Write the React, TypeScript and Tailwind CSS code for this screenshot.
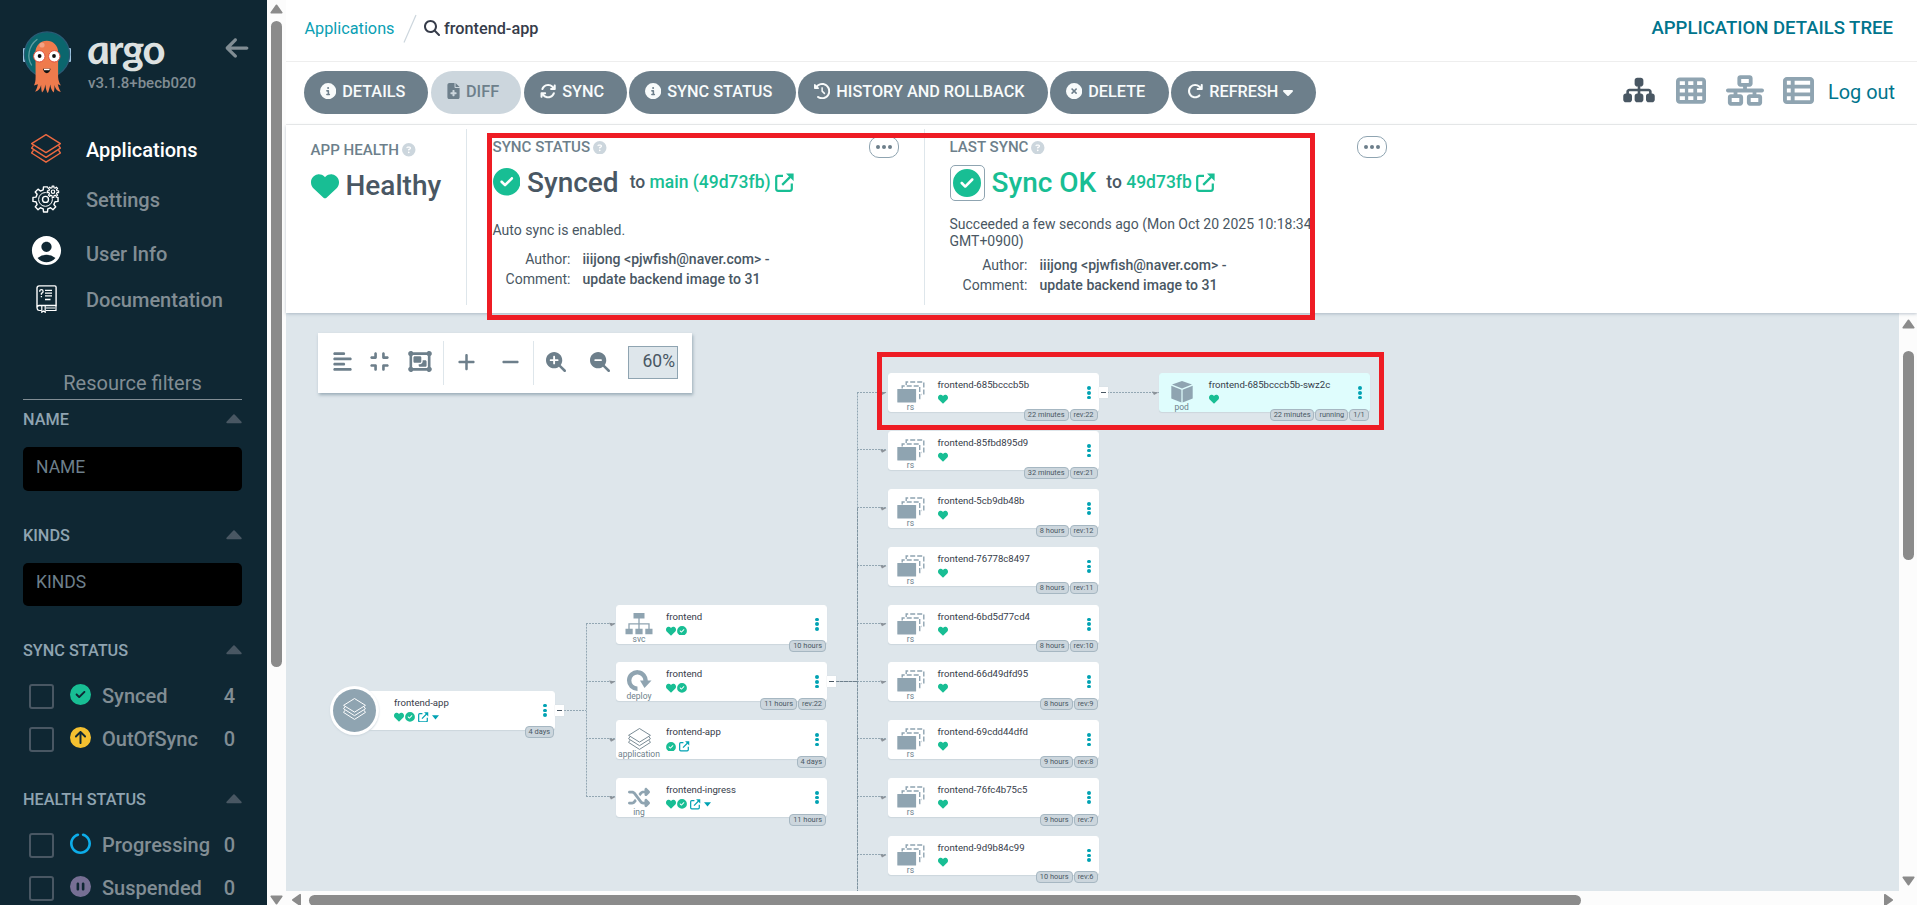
import React from "react";
import {
  FaAlignLeft,
  FaArrowRotateRight,
  FaArrowsRotate,
  FaCaretDown,
  FaCircleArrowUp,
  FaCircleCheck,
  FaCircleInfo,
  FaCircleNotch,
  FaCirclePause,
  FaCircleQuestion,
  FaCircleXmark,
  FaClockRotateLeft,
  FaCompress,
  FaFileMedical,
  FaHeart,
  FaMagnifyingGlass,
  FaMagnifyingGlassMinus,
  FaMagnifyingGlassPlus,
  FaMinus,
  FaNetworkWired,
  FaObjectGroup,
  FaPlus,
  FaShuffle,
  FaSitemap,
  FaTableCells,
  FaTableList,
  FaArrowLeft,
} from "react-icons/fa6";
import { MdAccountCircle } from "react-icons/md";

/* ---------- drawings ---------- */

function ArgoMascot() {
  return (
    <svg width="48" height="63" viewBox="0 0 48 63" className="block shrink-0">
      <rect x="0" y="17" width="4" height="14" rx="1" fill="#9dc3e0" />
      <rect x="44" y="17" width="4" height="14" rx="1" fill="#9dc3e0" />
      <circle cx="24" cy="23.5" r="22.6" fill="#0b666d" stroke="#2a5a75" strokeWidth="1.2" />
      <path d="M14 8.5C5 15 4 27 8.5 34" fill="none" stroke="#5f9da1" strokeWidth="1.3" strokeLinecap="round" />
      <path
        d="M12.5 21a11.3 11.3 0 0 1 22.6 0v25c.3 4 1.500 6.500 2.900 8.500l-3.200-1.200c.8 3 1.700 5.500 3 7.700-4-1-5.500-3.500-6.200-7-.1 3-.3 5.300-.8 7.600-2.300-2-3.100-4.600-3.500-8.100-.8 3.400-1.200 6-2.500 8.800-1.700-2.600-2-5.400-2.500-8.800-.5 3.500-1.200 6-3.300 8-.6-2.300-.9-4.500-.9-7.500-.9 3.500-2.300 5.800-6 6.800 1.400-2.200 2.200-4.600 2.800-7.500l-4 1.200c1.200-2.200 1.700-4.600 1.700-8.500z"
        fill="#ef7b4d"
      />
      <circle cx="19" cy="14" r="2.600" fill="#f5a283" />
      <circle cx="16.300" cy="25.300" r="5.700" fill="#fff" stroke="#e34e3b" strokeWidth="1" />
      <circle cx="31.300" cy="25.300" r="5.700" fill="#fff" stroke="#e34e3b" strokeWidth="1" />
      <circle cx="16.600" cy="25" r="1.900" fill="#111" />
      <circle cx="31" cy="25" r="1.900" fill="#111" />
      <path d="M20 37.800h7.600c-.5 2.800-2 4.400-3.800 4.400s-3.300-1.600-3.800-4.400z" fill="#111" />
      <path d="M21 37.800h5.600v1.400h-5.600z" fill="#fff" />
    </svg>
  );
}

function Layers({ className, width = 1.4 }: { className?: string; width?: number }) {
  return (
    <svg viewBox="0 0 30 29" className={className} fill="none" stroke="currentColor" strokeWidth={width} strokeLinejoin="round">
      <path d="M15 .7.6 9.700 15 18.600l14.400-8.900z" />
      <path d="M2.500 11.400.6 14.200 15 23.300l14.400-9.100-1.900-2.800" />
      <path d="M2.500 16.100.6 19 15 28.200 29.400 19l-1.900-2.900" />
    </svg>
  );
}

function gearPath(cx: number, cy: number, inner: number, outer: number, teeth: number, turn = 0) {
  const pts: string[] = [];
  const step = (Math.PI * 2) / teeth;
  for (let i = 0; i < teeth; i++) {
    const a = i * step + turn;
    const marks: [number, number][] = [
      [a - step * 0.3, inner],
      [a - step * 0.2, outer],
      [a + step * 0.2, outer],
      [a + step * 0.3, inner],
    ];
    for (const [ang, r] of marks) {
      pts.push(`${(cx + Math.sin(ang) * r).toFixed(2)} ${(cy - Math.cos(ang) * r).toFixed(2)}`);
    }
  }
  return `M${pts.join("L")}Z`;
}

function Gears() {
  return (
    <svg width="30" height="28" viewBox="0 0 30 28" className="block" fill="none" stroke="#fff" strokeWidth="1.4" strokeLinejoin="round">
      <path d={gearPath(14.5, 14.4, 9.8, 12.7, 8)} />
      <circle cx="14.500" cy="14.400" r="6.900" strokeWidth="1" />
      <circle cx="14.500" cy="14.400" r="3" />
      <circle cx="22" cy="6.700" r="6.600" fill="#0f2733" stroke="none" />
      <path d={gearPath(22, 6.7, 4.1, 5.7, 8)} strokeWidth="1.200" />
      <circle cx="22" cy="6.700" r="1.700" strokeWidth="1.200" />
    </svg>
  );
}

function DocIcon() {
  return (
    <svg width="21" height="28" viewBox="0 0 21 28" className="block" fill="none" stroke="#fff" strokeWidth="1.400">
      <path d="M3.200.9h15.600q1.300 0 1.300 1.300v18.300H3.200q-2.200 0-2.200 2.300V3.100Q1 .9 3.200.9z" />
      <path d="M1 22.500q0 3 2.400 3h2M10 25.500h10v-5M10 23h9" strokeWidth="1.200" />
      <path d="M5.800 20.500v6.700l1.700-1.300 1.700 1.300v-6.700" strokeWidth="1.200" />
      <path d="M3.700 6.700q0-2 1.700-2t1.700 1.700q0 1.200-1.700 2v1.300M5.400 11v1.200M9 5.400h7M9 8.100h7M9 10.800h7M9 14.500h5.500" strokeWidth="1.300" />
    </svg>
  );
}

function ExternalLink({ className }: { className?: string }) {
  return (
    <svg viewBox="0 0 19 19" className={className} fill="none" stroke="currentColor" strokeWidth="2.200">
      <path d="M8 2.800H3.200Q1.200 2.800 1.200 4.800v11q0 2 2 2h11.600q2 0 2-2V10.500" />
      <path d="M7.200 11.900 15.500 3.600" />
      <path d="M11 .5h7.600v7.600z" fill="currentColor" stroke="none" />
    </svg>
  );
}

function Triangle({ className }: { className?: string }) {
  return (
    <svg viewBox="0 0 13 10" className={className}>
      <path d="M6.500 1.300 11.800 8.700H1.200z" fill="#8b8b8b" stroke="#8b8b8b" strokeWidth="1.600" strokeLinejoin="round" />
    </svg>
  );
}

function SectionCaret() {
  return (
    <svg width="16" height="10" viewBox="0 0 16 10" className="block">
      <path d="M8 1.200 14.800 8.300H1.200z" fill="#495763" stroke="#495763" strokeWidth="1.800" strokeLinejoin="round" />
    </svg>
  );
}

/* ---------- sidebar ---------- */

function NavItem({ icon, label, row, active }: { icon: React.ReactNode; label: string; row: string; active?: boolean }) {
  return (
    <div className={`flex shrink-0 items-center ${row}`}>
      <div className="ml-[31px] flex w-[30px] justify-center">{icon}</div>
      <span className={`ml-[25px] text-[20px] leading-6 font-medium ${active ? "text-white" : "text-[#818d94]"}`}>{label}</span>
    </div>
  );
}

function FilterTitle({ children, className }: { children: string; className: string }) {
  return (
    <div className={`mr-[25px] ml-[23px] flex shrink-0 items-center justify-between text-[16.250px] font-medium text-[#8fa4b1] ${className}`}>
      <span>{children}</span>
      <div className="pb-[3px]">
        <SectionCaret />
      </div>
    </div>
  );
}

function FilterRow({ icon, label, count }: { icon: React.ReactNode; label: string; count: number }) {
  return (
    <div className="mr-[32px] ml-[29px] flex h-[43px] items-center text-[20px] font-medium text-[#818d94]">
      <div className="mt-[2px] h-[25px] w-[25px] shrink-0 rounded-[3px] border-2 border-[#495763]" />
      <div className="-mt-[2px] ml-[15.500px] w-[21px] shrink-0 text-[21px]">{icon}</div>
      <span className="ml-[11.500px]">{label}</span>
      <span className="ml-auto">{count}</span>
    </div>
  );
}

function Sidebar() {
  return (
    <aside className="flex h-full w-[267px] shrink-0 flex-col overflow-hidden bg-[#0f2733]">
      <div className="flex h-[125px] shrink-0 items-start pt-[30.500px] pl-[23px]">
        <ArgoMascot />
        <div className="ml-[16px] flex w-[130px] flex-col items-start">
          <span className="h-[44px] origin-left -skew-x-[-8deg] scale-x-[1.08] font-['Lato'] text-[41px] leading-[35px] font-bold tracking-[-1.500px] text-[#dde1e1] italic">
            argo
          </span>
          <span className="pl-px text-[15px] leading-[17px] font-medium text-[#818d94]">v3.1.8+becb020</span>
        </div>
        <FaArrowLeft className="mt-[4px] ml-[8px] h-[26px] w-[24px] text-[#818d94]" />
      </div>
      <NavItem active row="h-[50px]" label="Applications" icon={<Layers className="-mt-[3px] h-[29px] w-[30px] text-[#ef6a41]" />} />
      <NavItem row="h-[50px]" label="Settings" icon={<div className="-mt-[3px]"><Gears /></div>} />
      <NavItem row="h-[57px]" label="User Info" icon={<MdAccountCircle className="-mt-[7px] h-[35px] w-[35px] shrink-0 text-white" />} />
      <NavItem row="h-[36px]" label="Documentation" icon={<div className="-mt-[3px]"><DocIcon /></div>} />

      <div className="mt-[49px] mr-[25px] ml-[23px] flex h-[33px] shrink-0 items-center justify-center border-b border-[#818d94] text-[20px] text-[#818d94]">
        <span>Resource filters</span>
      </div>
      <FilterTitle className="mt-px h-[38px]">NAME</FilterTitle>
      <div className="mt-[8px] mr-[25px] ml-[23px] h-[44px] shrink-0 rounded-[5px] bg-black pl-[13px] text-[17.500px] leading-[41px] text-[#6d7f8b]">NAME</div>
      <FilterTitle className="mt-[27px] h-[37px]">KINDS</FilterTitle>
      <div className="mt-[8px] mr-[25px] ml-[23px] h-[43px] shrink-0 rounded-[5px] bg-black pl-[13px] text-[17.500px] leading-[39px] text-[#6d7f8b]">KINDS</div>
      <FilterTitle className="mt-[27px] h-[37px]">SYNC STATUS</FilterTitle>
      <div className="mt-[4px] shrink-0">
        <FilterRow icon={<FaCircleCheck className="text-[#18be94]" />} label="Synced" count={4} />
        <FilterRow icon={<FaCircleArrowUp className="text-[#f4c030]" />} label="OutOfSync" count={0} />
      </div>
      <FilterTitle className="mt-[22px] h-[37px]">HEALTH STATUS</FilterTitle>
      <div className="mt-[4px] shrink-0">
        <FilterRow icon={<FaCircleNotch className="text-[#0dadea]" />} label="Progressing" count={0} />
        <FilterRow icon={<FaCirclePause className="text-[#766f94]" />} label="Suspended" count={0} />
      </div>
    </aside>
  );
}

/* ---------- top of the page ---------- */

function ActionButton({ icon, label, width, disabled, caret }: { icon: React.ReactNode; label: string; width: string; disabled?: boolean; caret?: boolean }) {
  return (
    <button
      className={`flex h-[43px] items-center rounded-full pl-[16px] text-[16.250px] font-medium whitespace-nowrap ${width} ${
        disabled ? "bg-[#ccd6dd] text-[#6d7f8b]" : "bg-[#6d7f8b] text-[#f8fbfb]"
      }`}
    >
      <span className="-mt-[2px]">{icon}</span>
      <span className="ml-[6px]">{label}</span>
      {caret && <FaCaretDown className="ml-[2px] text-[16px]" />}
    </button>
  );
}

function TopBar() {
  return (
    <header className="flex h-[62px] shrink-0 items-center justify-between border-b border-[#eeeeee] bg-white pr-[24px] pb-[14px] pl-[18.500px]">
      <div className="flex items-center text-[16.250px]">
        <span className="mt-[11px] text-[#0aa0b4]">Applications</span>
        <svg width="14" height="30" viewBox="0 0 14 30" className="mt-[10px] ml-[8px] block">
          <path d="M13 1 1 28.500" stroke="#ccd6dd" strokeWidth="1.200" />
        </svg>
        <FaMagnifyingGlass className="mt-[9px] ml-[7px] text-[16px] text-[#363c4a]" />
        <span className="mt-[11px] ml-[4.500px] font-medium text-[#363c4a]">frontend-app</span>
      </div>
      <span className="mt-[10px] text-[18.550px] font-medium text-[#00758d]">APPLICATION DETAILS TREE</span>
    </header>
  );
}

function Toolbar() {
  return (
    <div className="flex h-[63px] shrink-0 items-center justify-between border-b border-[#eeeeee] bg-white pr-[22px] pb-[2px] pl-[18px]">
      <div className="flex items-center gap-[3px]">
        <ActionButton width="w-[124px]" label="DETAILS" icon={<FaCircleInfo />} />
        <ActionButton width="w-[90px]" disabled label="DIFF" icon={<FaFileMedical className="w-[13px]" />} />
        <ActionButton width="w-[103px]" label="SYNC" icon={<FaArrowsRotate />} />
        <ActionButton width="w-[167px] -ml-px" label="SYNC STATUS" icon={<FaCircleInfo />} />
        <ActionButton width="w-[250px] -ml-px" label="HISTORY AND ROLLBACK" icon={<FaClockRotateLeft />} />
        <ActionButton width="w-[119px] -ml-px" label="DELETE" icon={<FaCircleXmark />} />
        <ActionButton width="w-[145px] -ml-px" label="REFRESH" caret icon={<FaArrowRotateRight />} />
      </div>
      <div className="flex items-center">
        <FaSitemap className="-mt-[3px] h-[28px] w-[34px] text-[#495763]" />
        <FaTableCells className="-mt-[3px] ml-[20px] h-[31px] w-[30px] text-[#8fa4b1]" />
        <FaNetworkWired className="-mt-[3px] ml-[20px] h-[31px] w-[38px] text-[#8fa4b1]" />
        <FaTableList className="-mt-[3px] ml-[19px] h-[31px] w-[31px] text-[#8fa4b1]" />
        <span className="ml-[14px] pt-px text-[19.900px] text-[#00758d]">Log out</span>
      </div>
    </div>
  );
}

function StatusTitle({ children }: { children: string }) {
  return (
    <div className="flex h-[18px] items-center text-[15.100px] font-medium text-[#6d7f8b]">
      {children}
      <FaCircleQuestion className="ml-[3px] text-[13.500px] text-[#ccd6dd]" />
    </div>
  );
}

function MoreButton() {
  return (
    <button className="flex h-[22px] w-[30px] shrink-0 items-center justify-center gap-[2px] rounded-[10px] border border-[#8fa4b1] bg-white">
      <i className="h-[4px] w-[4px] rounded-full bg-[#6d7f8b]" />
      <i className="h-[4px] w-[4px] rounded-full bg-[#6d7f8b]" />
      <i className="h-[4px] w-[4px] rounded-full bg-[#6d7f8b]" />
    </button>
  );
}

function CommitInfo() {
  return (
    <div className="grid grid-cols-[78px_auto] gap-x-[12px] text-[14.060px] leading-[20px] whitespace-nowrap text-[#495763]">
      <span className="text-right">Author:</span>
      <span className="font-medium">iiijong &lt;pjwfish@naver.com&gt; -</span>
      <span className="text-right">Comment:</span>
      <span className="font-medium">update backend image to 31</span>
    </div>
  );
}

function StatusPanel() {
  return (
    <section className="relative z-10 flex h-[188px] shrink-0 bg-white pt-[4px] pb-[8px] shadow-[0_1px_3px_rgba(110,130,150,0.45)]">
      <div className="w-[181px] border-r border-[#dee6eb] pt-[12px] pl-[24.500px]">
        <StatusTitle>APP HEALTH</StatusTitle>
        <div className="mt-[10px] flex h-[34px] items-center text-[28px] font-medium text-[#495763]">
          <FaHeart className="mr-[7px] text-[28px] text-[#18be94]" />
          Healthy
        </div>
      </div>

      <div className="w-[458px] border-r border-[#dee6eb] pt-[7px] pr-[25px] pl-[25.500px]">
        <div className="flex h-[22px] items-center justify-between">
          <div className="pt-px"><StatusTitle>SYNC STATUS</StatusTitle></div>
          <MoreButton />
        </div>
        <div className="mt-[7px] flex h-[35px] items-center text-[28px] font-medium whitespace-nowrap text-[#495763]">
          <FaCircleCheck className="-mt-px mr-[7px] text-[27.500px] text-[#18be94]" />
          Synced
          <span className="ml-[11px] text-[17.500px]">
            to <span className="text-[#18be94]">main (49d73fb)</span>
          </span>
          <ExternalLink className="-mt-px ml-[4px] h-[19px] w-[19px] text-[#18be94]" />
        </div>
        <div className="mt-[20px] text-[14.060px] leading-[20px] text-[#495763]">Auto sync is enabled.</div>
        <div className="mt-[9px]"><CommitInfo /></div>
      </div>

      <div className="w-[462px] pt-[7px] pl-[24.500px]">
        <div className="flex h-[22px] items-center justify-between">
          <div className="pt-px"><StatusTitle>LAST SYNC</StatusTitle></div>
          <MoreButton />
        </div>
        <div className="mt-[7px] flex h-[35px] items-center text-[28px] font-medium whitespace-nowrap text-[#18be94]">
          <span className="mt-px mr-[7px] flex h-[36px] w-[35px] shrink-0 items-center justify-center rounded-[5px] border border-[#8fa4b1]">
            <FaCircleCheck className="text-[28px]" />
          </span>
          Sync OK
          <span className="ml-[10px] text-[17.500px]">
            <span className="text-[#495763]">to</span> 49d73fb
          </span>
          <ExternalLink className="-mt-px ml-[4px] h-[19px] w-[19px]" />
        </div>
        <div className="mt-[16px] w-[380px] text-[14px] leading-[17px] text-[#495763]">
          Succeeded a few seconds ago (Mon Oct 20 2025 10:18:34 GMT+0900)
        </div>
        <div className="mt-[5px]"><CommitInfo /></div>
      </div>
    </section>
  );
}

/* ---------- resource tree ---------- */

function RsIcon() {
  return (
    <svg width="28" height="22" viewBox="0 0 28 22" className="block">
      <g fill="none" stroke="#8fa4b1" strokeWidth="1.400" strokeDasharray="5 2">
        <path d="M9.200 4V1h17.600v12.500H24.500" />
        <path d="M5.200 7.500V5h17.500v12.500H21" />
      </g>
      <rect x=".3" y="8" width="18.800" height="13.500" rx=".6" fill="#8fa4b1" />
    </svg>
  );
}

function SvcIcon() {
  return (
    <svg width="28" height="22" viewBox="0 0 28 22" className="block" fill="#8fa4b1">
      <path d="M8.500 0h11v5.500h-11zM.5 15.800h7.200V21.300H.5zM10.400 15.800h7.200V21.300h-7.200zM20.300 15.800h7.200V21.300h-7.200z" />
      <path d="M14 5v11M4 16v-5.200h20V16" fill="none" stroke="#8fa4b1" strokeWidth="1.300" />
    </svg>
  );
}

function DeployIcon() {
  return (
    <svg width="26" height="22" viewBox="0 0 26 22" className="block">
      <path d="M11.500 18.700A8.200 8.200 0 1 1 19.500 11.500" fill="none" stroke="#8fa4b1" strokeWidth="4.400" />
      <path d="M14 10.500h11.500L18.500 18z" fill="#8fa4b1" />
    </svg>
  );
}

function PodIcon() {
  return (
    <svg width="22" height="22" viewBox="0 0 22 22" className="block" fill="#8fa4b1">
      <path d="M11 0 21 3.600 11 7.600 1 3.600z" />
      <path d="M.3 4.800 10.400 8.700V21.600L.3 17.400z" />
      <path d="M21.700 4.800 11.600 8.700V21.600L21.700 17.400z" />
    </svg>
  );
}

type Mark = "heart" | "check" | "link" | "caret";

function Marks({ marks }: { marks: Mark[] }) {
  return (
    <div className="flex items-center">
      {marks.map((m) => {
        if (m === "heart") return <FaHeart key={m} className="mr-px h-[10px] w-[10px] text-[#18be94]" />;
        if (m === "check") return <FaCircleCheck key={m} className="mr-[3px] h-[9.800px] w-[10px] text-[#18be94]" />;
        if (m === "link") return <ExternalLink key={m} className="h-[10.500px] w-[10.500px] text-[#00a2b3]" />;
        return (
          <svg key={m} width="7" height="5" viewBox="0 0 7 5" className="ml-[3px]">
            <path d="M0 .3h7L3.500 4.500z" fill="#00a2b3" />
          </svg>
        );
      })}
    </div>
  );
}

interface NodeData {
  x: number;
  y: number;
  w: number;
  name: string;
  kind: string;
  marks: Mark[];
  pills: string[];
  collapse?: boolean;
  tint?: boolean;
}

function KindIcon({ kind }: { kind: string }) {
  if (kind === "rs") return <RsIcon />;
  if (kind === "svc") return <SvcIcon />;
  if (kind === "deploy") return <DeployIcon />;
  if (kind === "pod") return <PodIcon />;
  if (kind === "ing") return <FaShuffle className="h-[23px] w-[22px] text-[#8fa4b1]" />;
  return <Layers className="h-[22px] w-[23px] text-[#6d7f8b]" width={1.2} />;
}

function TreeNode({ node }: { node: NodeData }) {
  const root = node.kind === "";
  return (
    <div className="absolute" style={{ left: node.x, top: node.y, width: node.w, height: 39 }}>
      <div
        className={`flex h-full rounded-[3px] border shadow-[0_1px_1px_#ccd6dd] ${node.tint ? "border-[#dffdfd] bg-[#dffdfd]" : "border-white bg-white"}`}
      >
        {root ? (
          <div className="-mt-[6px] -ml-[25px] flex h-[49px] w-[49px] shrink-0 items-center justify-center rounded-full bg-white shadow-[0_1px_2px_#ccd6dd]">
            <div className="flex h-[43.500px] w-[43.500px] items-center justify-center rounded-full bg-[#8fa4b1]">
              <Layers className="-mt-[2px] h-[22px] w-[23px] text-white" width={1.300} />
            </div>
          </div>
        ) : (
          <div className="flex w-[44px] shrink-0 flex-col items-center pt-[7px]">
            <div className="flex h-[22px] items-center">
              <KindIcon kind={node.kind} />
            </div>
            <span className="text-[8.500px] leading-[9px] text-[#6d7f8b]">{node.kind}</span>
          </div>
        )}
        <div className={`flex flex-col pt-[5px] ${root ? "pl-[15px]" : "pl-[5px]"}`}>
          <span className="text-[9.600px] leading-[12px] whitespace-nowrap text-[#363c4a]">{node.name}</span>
          <div className="mt-[3px]">
            <Marks marks={node.marks} />
          </div>
        </div>
        <div className="mr-[7px] ml-auto flex flex-col items-center justify-center gap-[1.200px]">
          <i className="h-[3.600px] w-[3.600px] rounded-full bg-[#00a2b3]" />
          <i className="h-[3.600px] w-[3.600px] rounded-full bg-[#00a2b3]" />
          <i className="h-[3.600px] w-[3.600px] rounded-full bg-[#00a2b3]" />
        </div>
      </div>
      <div className="absolute right-px -bottom-[8.700px] flex gap-px">
        {node.pills.map((p) => (
          <span
            key={p}
            className="h-[12px] rounded-[4px] border border-[#a6b7c2] bg-[#ccd6dd] px-[3px] text-[7.400px] leading-[10px] whitespace-nowrap text-[#495763]"
          >
            {p}
          </span>
        ))}
      </div>
      {node.collapse && (
        <div className="absolute top-[14px] -right-[9px] flex h-[11px] w-[9px] items-center justify-center bg-white shadow-[0_0_1px_#ccd6dd]">
          <i className="h-px w-[5px] bg-[#495763]" />
        </div>
      )}
    </div>
  );
}

const RS_ROWS: [string, string, string][] = [
  ["frontend-685bcccb5b", "22 minutes", "rev:22"],
  ["frontend-85fbd895d9", "32 minutes", "rev:21"],
  ["frontend-5cb9db48b", "8 hours", "rev:12"],
  ["frontend-76778c8497", "8 hours", "rev:11"],
  ["frontend-6bd5d77cd4", "8 hours", "rev:10"],
  ["frontend-66d49dfd95", "8 hours", "rev:9"],
  ["frontend-69cdd44dfd", "9 hours", "rev:8"],
  ["frontend-76fc4b75c5", "9 hours", "rev:7"],
  ["frontend-9d9b84c99", "10 hours", "rev:6"],
];

/* Canvas coordinates: origin is the top-left corner of the tree area. */
const PITCH = 57.8;
const FIRST = 60.4;

const NODES: NodeData[] = [
  { x: 68, y: 377.8, w: 201, name: "frontend-app", kind: "", marks: ["heart", "check", "link", "caret"], pills: ["4 days"], collapse: true },
  { x: 330, y: FIRST + PITCH * 4, w: 211, name: "frontend", kind: "svc", marks: ["heart", "check"], pills: ["10 hours"] },
  { x: 330, y: FIRST + PITCH * 5, w: 211, name: "frontend", kind: "deploy", marks: ["heart", "check"], pills: ["11 hours", "rev:22"], collapse: true },
  { x: 330, y: FIRST + PITCH * 6, w: 211, name: "frontend-app", kind: "application", marks: ["check", "link"], pills: ["4 days"] },
  { x: 330, y: FIRST + PITCH * 7, w: 211, name: "frontend-ingress", kind: "ing", marks: ["heart", "check", "link", "caret"], pills: ["11 hours"] },
  ...RS_ROWS.map(([name, age, rev], i): NodeData => ({
    x: 601.5,
    y: FIRST + PITCH * i,
    w: 211,
    name,
    kind: "rs",
    marks: ["heart"],
    pills: [age, rev],
    collapse: i === 0,
  })),
  { x: 872.6, y: FIRST, w: 211, name: "frontend-685bcccb5b-swz2c", kind: "pod", marks: ["heart"], pills: ["22 minutes", "running", "1/1"], tint: true },
];

function Edges() {
  const mid = FIRST + 19.1;
  const arrow = (x: number, y: number) => <path key={`a${x}-${y}`} d={`M${x} ${y - 1}l6.500 1-4.500 2.500z`} fill="#8b9299" />;
  return (
    <svg className="absolute top-0 left-0" width="1613" height="578" viewBox="0 0 1613 578">
      <g fill="none" stroke="#93a7b3" strokeWidth="1" strokeDasharray="2 1">
        <path d="M278 397.500H300" />
        <path d={`M300.500 ${mid + PITCH * 4}V${mid + PITCH * 7}`} />
        {[4, 5, 6, 7].map((i) => (
          <path key={i} d={`M300 ${Math.round(mid + PITCH * i) - 0.5}H329`} />
        ))}
        {RS_ROWS.map((r, i) => (
          <path key={r[0]} d={`M571 ${Math.round(mid + PITCH * i) - 0.5}H601`} />
        ))}
        <path d={`M821 ${mid}H873`} />
      </g>
      <path d={`M571.500 ${mid}V${mid + PITCH * 2}`} stroke="#8fa4b1" strokeDasharray="2 1" fill="none" />
      <path d={`M571.500 ${mid + PITCH * 2}V578`} stroke="#7d929f" strokeDasharray="3 .6" fill="none" />
      <path d={`M549 ${Math.round(mid + PITCH * 5) - 0.5}H571`} stroke="#6d7f8b" strokeDasharray="4 .5" fill="none" />
      {[4, 5, 6, 7].map((i) => arrow(323, mid + PITCH * i))}
      {RS_ROWS.map((_, i) => arrow(594, mid + PITCH * i))}
      {arrow(866, mid)}
    </svg>
  );
}

function ZoomBar() {
  return (
    <div className="mt-[20px] ml-[32px] flex h-[60px] w-[374px] items-center bg-white pb-[3px] text-[#6d7f8b] shadow-[1px_2px_3px_rgba(110,135,150,0.6)]">
      <FaAlignLeft className="ml-[15px] h-[21px] w-[19px]" />
      <FaCompress className="ml-[18px] h-[21px] w-[19px]" />
      <FaObjectGroup className="ml-[19px] h-[21px] w-[24px]" />
      <div className="mt-[3px] ml-[11px] h-[44px] w-px bg-[#dee6eb]" />
      <FaPlus className="ml-[13px] h-[20px] w-[19px]" />
      <FaMinus className="ml-[25px] h-[20px] w-[19px]" />
      <div className="mt-[3px] ml-[13px] h-[44px] w-px bg-[#dee6eb]" />
      <FaMagnifyingGlassPlus className="ml-[12px] h-[20px] w-[20px]" />
      <FaMagnifyingGlassMinus className="ml-[24px] h-[20px] w-[20px]" />
      <div className="mt-[2px] ml-[18px] h-[33px] w-[50px] border border-[#8fa4b1] bg-[#dee6eb] pr-[2px] text-right text-[17.500px] leading-[28px] text-[#495763]">
        60%
      </div>
    </div>
  );
}

function TreeArea() {
  return (
    <div className="relative min-w-0 flex-1 overflow-hidden bg-[#dee6eb]">
      <Edges />
      {NODES.map((n) => (
        <TreeNode key={`${n.x}-${n.y}`} node={n} />
      ))}
      <ZoomBar />
    </div>
  );
}

/* ---------- page ---------- */

export default function App() {
  return (
    <div className="relative flex h-[905px] w-[1917px] overflow-hidden bg-white font-['Roboto',sans-serif]">
      <Sidebar />
      <div className="flex w-[19px] shrink-0 flex-col items-center bg-[#fcfcfc] pt-[4px]">
        <Triangle className="h-[10px] w-[13px]" />
        <div className="mt-[7px] h-[646px] w-[11px] rounded-full bg-[#8b8b8b]" />
        <Triangle className="mt-auto h-[10px] w-[13px] rotate-180" />
      </div>

      <main className="flex min-w-0 flex-1 flex-col">
        <TopBar />
        <Toolbar />
        <StatusPanel />
        <div className="flex h-[578px]">
          <TreeArea />
          <div className="flex w-[18px] shrink-0 flex-col items-center bg-[#fcfcfc] pt-[6px] pb-[5px]">
            <Triangle className="h-[10px] w-[13px]" />
            <div className="mt-[22px] h-[209px] w-[11px] rounded-full bg-[#8b8b8b]" />
            <Triangle className="mt-auto h-[10px] w-[13px] rotate-180" />
          </div>
        </div>
        <div className="flex h-[14px] items-start overflow-hidden bg-[#fcfcfc] pt-[4px]">
          <Triangle className="ml-[4px] h-[10px] w-[13px] shrink-0 -rotate-90" />
          <div className="ml-[6px] h-[11px] w-[1272px] shrink-0 rounded-full bg-[#8b8b8b]" />
          <Triangle className="ml-[301px] h-[10px] w-[13px] shrink-0 rotate-90" />
        </div>
      </main>

      <div className="absolute top-[133px] left-[487px] z-20 h-[187px] w-[828px] border-[5px] border-[#ee1c24]" />
      <div className="absolute top-[352px] left-[877px] z-20 h-[78px] w-[507px] border-[5px] border-[#ee1c24]" />
    </div>
  );
}
